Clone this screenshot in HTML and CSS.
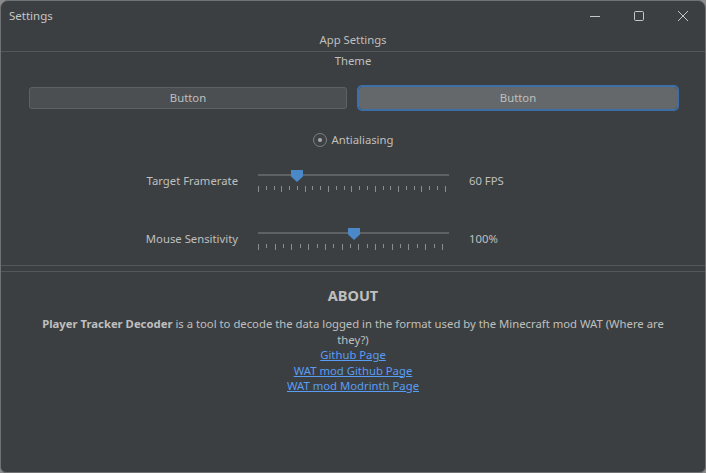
FILE: index.html
```html
<!DOCTYPE html>
<html>
<head>
<meta charset="utf-8">
<link rel="stylesheet" href="styles.css">
</head>
<body>
<div class="window">
  <div class="titlebar">
    <span class="title">Settings</span>
    <div class="controls">
      <span class="ctl"><svg width="12" height="12" viewBox="0 0 12 12"><path d="M1 6.5h10" stroke="#c4c7ca" stroke-width="1"/></svg></span>
      <span class="ctl"><svg width="12" height="12" viewBox="0 0 12 12"><rect x="1.5" y="1.5" width="9" height="9" rx="1.2" fill="none" stroke="#c4c7ca" stroke-width="1"/></svg></span>
      <span class="ctl"><svg width="12" height="12" viewBox="0 0 12 12"><path d="M1 1L11 11M11 1L1 11" stroke="#c4c7ca" stroke-width="1"/></svg></span>
    </div>
  </div>
  <div class="section-title">App Settings</div>
  <div class="group-title">Theme</div>
  <div class="theme-row">
    <div class="btn">Button</div>
    <div class="btn btn-selected">Button</div>
  </div>
  <div class="radio-row">
    <span class="radio"><span class="dot"></span></span>
    <span class="radio-label">Antialiasing</span>
  </div>
  <div class="slider-row">
    <div class="slider-label">Target Framerate</div>
    <div class="slider">
      <div class="track"></div>
      <div class="thumb thumb-a"></div>
      <div class="ticks ticks-a" id="ticksA"></div>
    </div>
    <div class="slider-value">60 FPS</div>
  </div>
  <div class="slider-row slider-row-2">
    <div class="slider-label">Mouse Sensitivity</div>
    <div class="slider">
      <div class="track"></div>
      <div class="thumb thumb-b"></div>
      <div class="ticks ticks-b" id="ticksB"></div>
    </div>
    <div class="slider-value">100%</div>
  </div>
  <div class="sep"></div>
  <div class="sep sep-2"></div>
  <div class="about">
    <div class="about-title">ABOUT</div>
    <p class="about-text"><b>Player Tracker Decoder</b> is a tool to decode the data logged in the format used by the Minecraft mod WAT (Where are they?)<br>
    <a href="#">Github Page</a><br>
    <a href="#">WAT mod Github Page</a><br>
    <a href="#">WAT mod Modrinth Page</a></p>
  </div>
</div>
<script src="script.js"></script>
</body>
</html>
```

FILE: script.js
```js
function makeTicks(id, count, majorEvery) {
  var el = document.getElementById(id);
  for (var i = 0; i < count; i++) {
    var t = document.createElement('span');
    t.className = (i % majorEvery === 0) ? 'tick major' : 'tick';
    el.appendChild(t);
  }
}
makeTicks('ticksA', 25, 3);
makeTicks('ticksB', 23, 2);
```

FILE: styles.css
```css
html, body {
  margin: 0;
  padding: 0;
  background: #8c8c8c;
}
body {
  width: 706px;
  height: 473px;
  overflow: hidden;
  font-family: "Noto Sans", "Open Sans", sans-serif;
  font-size: 11.3px;
  color: #bfbfbf;
}
.window {
  box-sizing: border-box;
  width: 706px;
  height: 473px;
  background: #3c3f41;
  border: 1px solid #6f7173;
  border-radius: 8px 8px 6px 6px;
  display: flex;
  flex-direction: column;
  overflow: hidden;
}
.titlebar {
  height: 30px;
  display: flex;
  align-items: center;
  justify-content: space-between;
  flex: none;
}
.title {
  margin-left: 8px;
  margin-bottom: 2px;
  color: #c3c6c9;
  font-size: 11.5px;
}
.controls {
  display: flex;
  height: 30px;
}
.ctl {
  width: 44px;
  display: flex;
  align-items: center;
  justify-content: center;
}
.section-title {
  height: 20px;
  line-height: 17px;
  text-align: center;
  border-bottom: 1px solid #55585a;
  flex: none;
}
.group-title {
  height: 18px;
  line-height: 17px;
  text-align: center;
  flex: none;
}
.theme-row {
  margin-top: 17px;
  padding: 0 28px;
  display: flex;
  gap: 12px;
  flex: none;
}
.btn {
  flex: 1;
  box-sizing: border-box;
  height: 22px;
  line-height: 20px;
  text-align: center;
  background: #4c4f51;
  border: 1px solid #5f6264;
  border-radius: 3px;
}
.btn-selected {
  background: #65686a;
  border-color: #65686a;
  outline: 2px solid #3d6ea8;
  outline-offset: 0px;
}
.radio-row {
  margin-top: 24px;
  height: 14px;
  display: flex;
  align-items: center;
  justify-content: center;
  gap: 5px;
  flex: none;
}
.radio {
  box-sizing: border-box;
  width: 14px;
  height: 14px;
  border: 1px solid #7d8082;
  border-radius: 50%;
  display: flex;
  align-items: center;
  justify-content: center;
  background: #3f4244;
}
.dot {
  width: 4px;
  height: 4px;
  border-radius: 50%;
  background: #a9acae;
}
.radio-label {
  line-height: 14px;
}
.slider-row {
  margin-top: 21px;
  height: 26px;
  display: grid;
  grid-template-columns: 237px 191px auto;
  column-gap: 20px;
  align-items: center;
  flex: none;
}
.slider-row-2 {
  margin-top: 32px;
}
.slider-label,
.slider-value {
  line-height: 24px;
}
.slider-label {
  text-align: right;
}
.slider {
  position: relative;
  height: 26px;
}
.track {
  position: absolute;
  left: 0;
  right: 0;
  top: 6px;
  height: 2px;
  background: #5f6265;
}
.thumb {
  position: absolute;
  top: 2px;
  width: 12px;
  height: 12px;
  background: #4a88c7;
  clip-path: polygon(0 0, 100% 0, 100% 55%, 50% 100%, 0 55%);
}
.thumb-a { left: 33px; }
.thumb-b { left: 90px; }
.ticks {
  position: absolute;
  left: 0;
  top: 18px;
  display: flex;
  justify-content: space-between;
  align-items: flex-start;
}
.ticks-a { width: 188px; }
.ticks-b { width: 185px; }
.tick {
  width: 1px;
  height: 4px;
  background: #8b8e90;
}
.tick.major {
  height: 6px;
}
.slider-value {
  text-align: left;
}
.sep {
  margin-top: 13px;
  height: 0;
  border-top: 1px solid #55585a;
  flex: none;
}
.sep-2 {
  margin-top: 5px;
}
.about {
  text-align: center;
  flex: none;
}
.about-title {
  margin-top: 14px;
  font-size: 14.5px;
  font-weight: bold;
  line-height: 18px;
}
.about-text {
  margin: 12px auto 0;
  width: 640px;
  line-height: 15.5px;
}
.about-text b {
  font-weight: bold;
}
.about-text a {
  color: #589df6;
  text-decoration: underline;
}
```
